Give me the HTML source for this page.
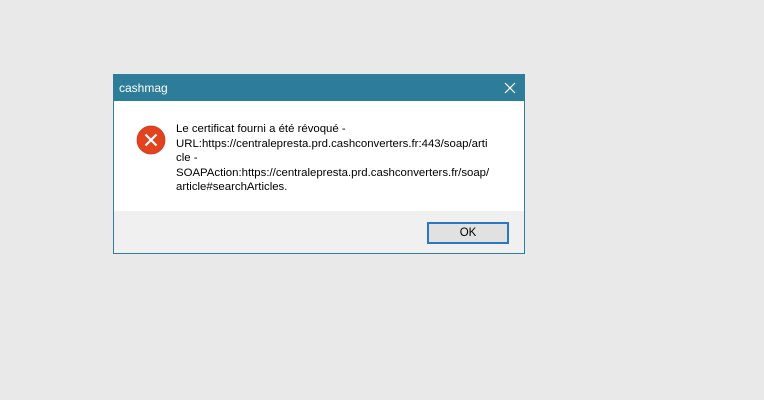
<!DOCTYPE html>
<html><head><meta charset="utf-8"><style>
html,body{margin:0;padding:0;width:764px;height:400px;background:#e9e9e9;overflow:hidden;font-family:"Liberation Sans",sans-serif;}
.dlg{position:absolute;left:113px;top:74px;width:410px;height:178px;border:1px solid #2f7f9c;background:#fff;}
.title{position:absolute;left:0;top:0;width:410px;height:26px;background:#2d7d9a;color:#fff;font-size:12px;line-height:26px;}
.title span{position:absolute;left:5px;}
.close{position:absolute;right:8px;top:7px;width:12px;height:12px;}
.foot{position:absolute;left:0;top:136px;width:410px;height:42px;background:#f0f0f0;}
.ok{position:absolute;left:313px;top:11px;width:78px;height:18px;border:2px solid #2a77c6;background:#e1e1e1;box-sizing:content-box;font-size:11.5px;text-align:center;line-height:18px;color:#000;}
.icon{position:absolute;left:22px;top:50px;}
.msg{position:absolute;left:62px;top:47px;font-size:11.4px;line-height:14.6px;color:#000;white-space:nowrap;}
</style></head><body>
<div class="dlg">
 <div class="title"><span>cashmag</span>
  <svg class="close" viewBox="0 0 12 12"><path d="M1 1L11 11M11 1L1 11" stroke="#fff" stroke-width="1.2"/></svg>
 </div>
 <svg class="icon" width="30" height="30" viewBox="0 0 30 30"><circle cx="15" cy="15" r="14" fill="#e3421f" stroke="#c93a1b" stroke-width="0.8"/><path d="M9.5 9.5L20.5 20.5M20.5 9.5L9.5 20.5" stroke="#fff" stroke-width="2.2"/></svg>
 <div class="msg">Le certificat fourni a été révoqué -<br>URL:https://centralepresta.prd.cashconverters.fr:443/soap/arti<br>cle -<br>SOAPAction:https://centralepresta.prd.cashconverters.fr/soap/<br>article#searchArticles.</div>
 <div class="foot"><div class="ok">OK</div></div>
</div>
</body></html>
